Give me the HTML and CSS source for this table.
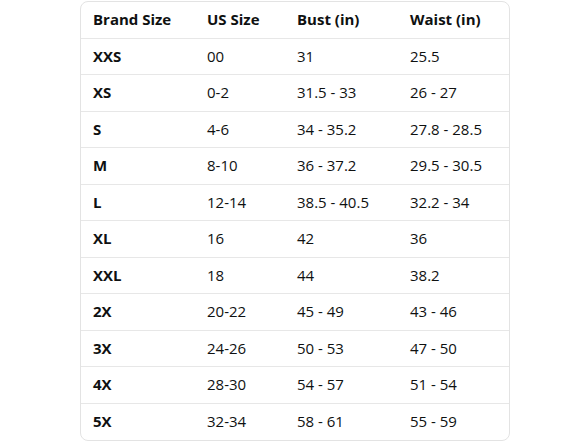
FILE: index.html
```html
<!DOCTYPE html>
<html>
<head>
<meta charset="utf-8">
<link rel="stylesheet" href="styles.css">
</head>
<body>
<div class="wrap">
<table class="chart">
<thead>
<tr><th>Brand Size</th><th>US Size</th><th>Bust (in)</th><th>Waist (in)</th></tr>
</thead>
<tbody>
<tr><th>XXS</th><td>00</td><td>31</td><td>25.5</td></tr>
<tr><th>XS</th><td>0-2</td><td>31.5 - 33</td><td>26 - 27</td></tr>
<tr><th>S</th><td>4-6</td><td>34 - 35.2</td><td>27.8 - 28.5</td></tr>
<tr><th>M</th><td>8-10</td><td>36 - 37.2</td><td>29.5 - 30.5</td></tr>
<tr><th>L</th><td>12-14</td><td>38.5 - 40.5</td><td>32.2 - 34</td></tr>
<tr><th>XL</th><td>16</td><td>42</td><td>36</td></tr>
<tr><th>XXL</th><td>18</td><td>44</td><td>38.2</td></tr>
<tr><th>2X</th><td>20-22</td><td>45 - 49</td><td>43 - 46</td></tr>
<tr><th>3X</th><td>24-26</td><td>50 - 53</td><td>47 - 50</td></tr>
<tr><th>4X</th><td>28-30</td><td>54 - 57</td><td>51 - 54</td></tr>
<tr><th>5X</th><td>32-34</td><td>58 - 61</td><td>55 - 59</td></tr>
</tbody>
</table>
</div>
</body>
</html>
```
FILE: styles.css
```css
html, body {
  margin: 0;
  padding: 0;
  background: #ffffff;
}
.wrap {
  padding-top: 1px;
  padding-left: 80px;
}
.chart {
  width: 430px;
  border-collapse: separate;
  border-spacing: 0;
  border: 1px solid #e3e3e3;
  border-radius: 8px;
  font-family: "Open Sans", "Noto Sans", sans-serif;
  font-size: 15px;
  line-height: 20px;
  color: #0f1111;
  table-layout: fixed;
}
.chart th, .chart td {
  box-sizing: border-box;
  text-align: left;
  padding: 0 0 1px 12px;
  height: 36.5px;
  border-bottom: 1px solid #e7e7e7;
  font-weight: 400;
  white-space: nowrap;
}
.chart th {
  font-weight: 700;
}
.chart tbody tr:last-child th, .chart tbody tr:last-child td {
  border-bottom: none;
}
.chart th:nth-child(1), .chart td:nth-child(1) { width: 114px; }
.chart th:nth-child(2), .chart td:nth-child(2) { width: 90px; }
.chart th:nth-child(3), .chart td:nth-child(3) { width: 113px; }
```
